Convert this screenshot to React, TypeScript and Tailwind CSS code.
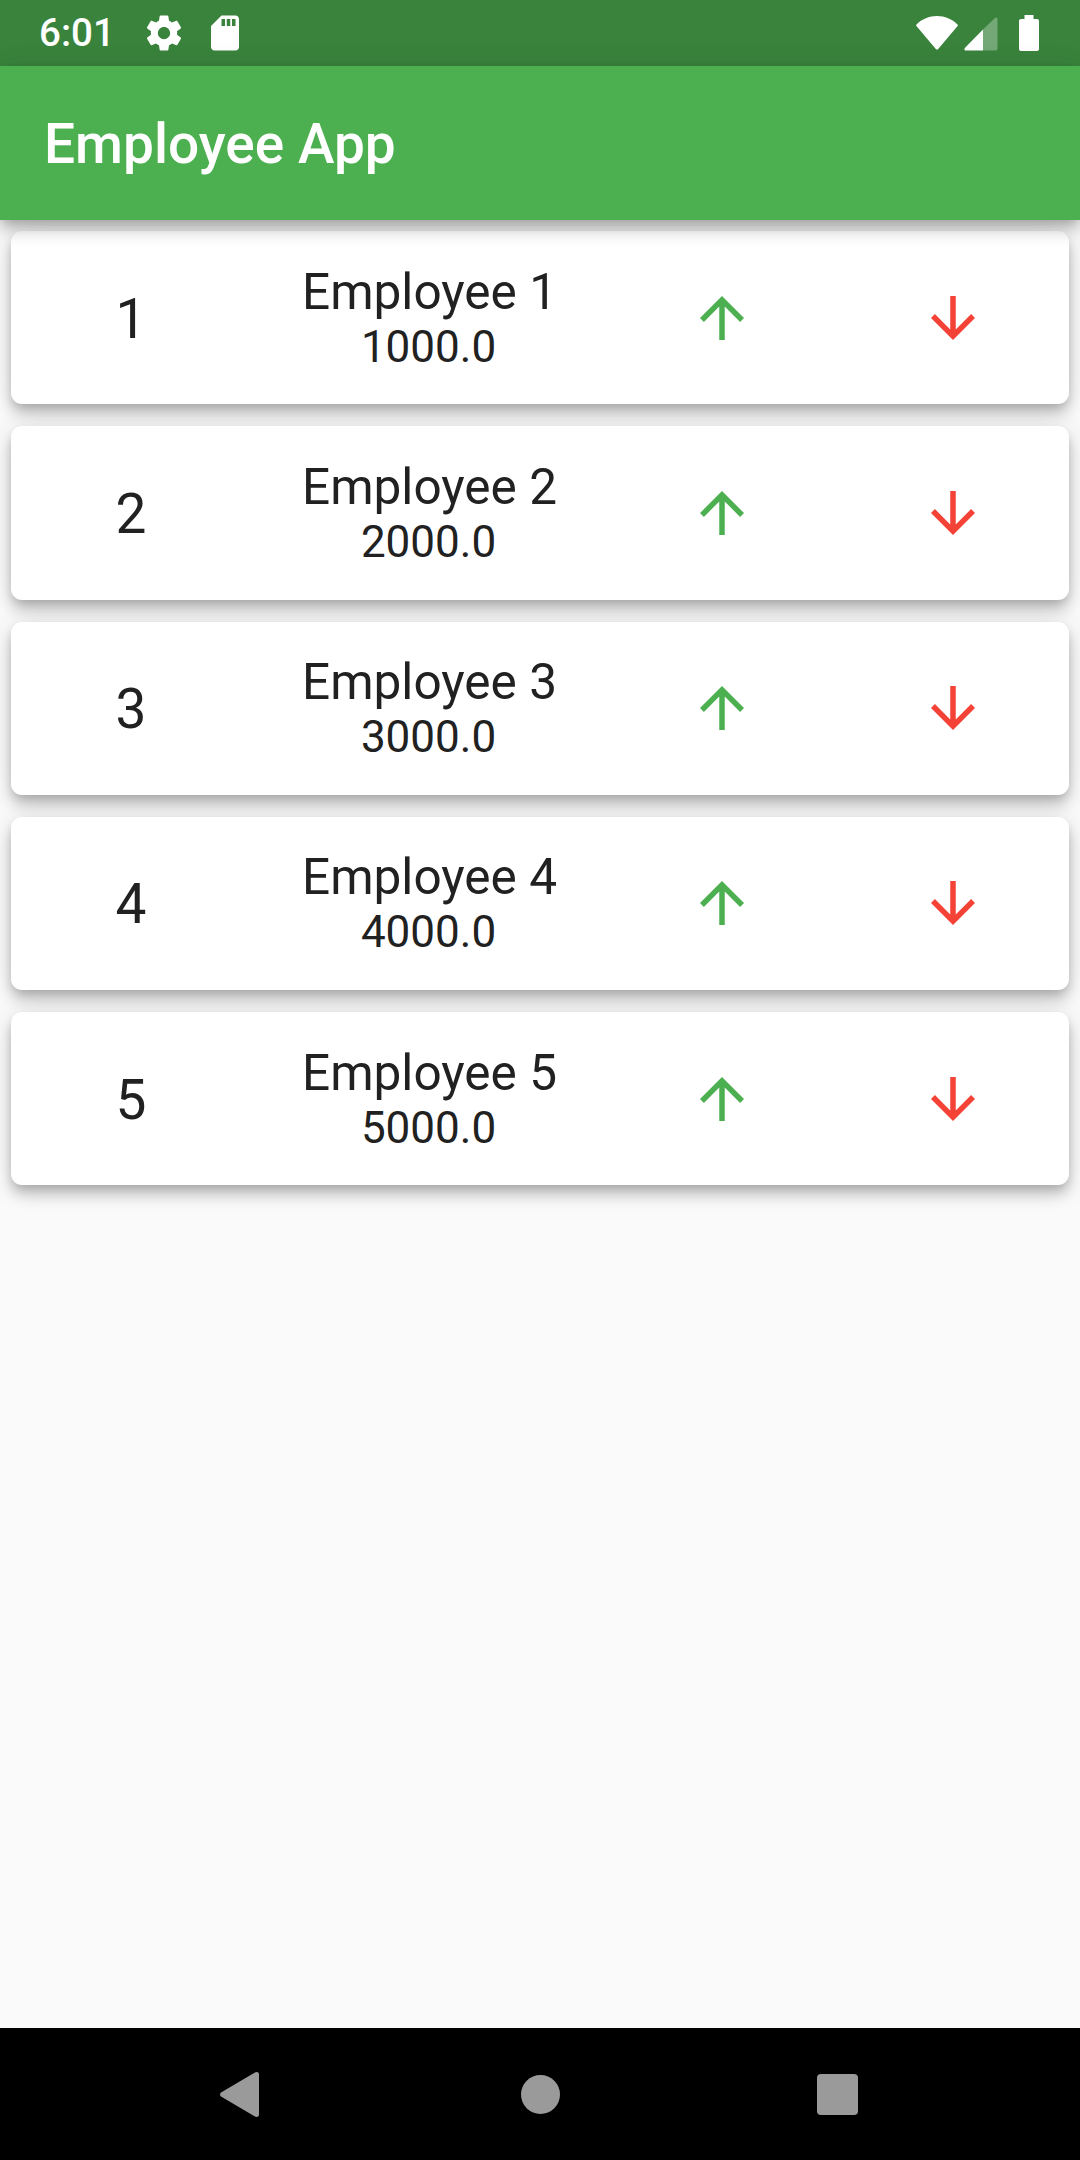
const font = 'font-["Roboto",sans-serif]'

const employees = [
  { id: 1, name: 'Employee 1', salary: '1000.0' },
  { id: 2, name: 'Employee 2', salary: '2000.0' },
  { id: 3, name: 'Employee 3', salary: '3000.0' },
  { id: 4, name: 'Employee 4', salary: '4000.0' },
  { id: 5, name: 'Employee 5', salary: '5000.0' },
]

function StatusBar() {
  return (
    <div className="h-[66px] shrink-0 bg-[#39833c] flex items-center pl-[39px] pr-[41px] text-white">
      <span className="text-[38.5px] font-medium leading-[66px] w-[105px]">6:01</span>
      {/* settings */}
      <svg className="w-[42px] h-[42px] -mt-[1px] -ml-[1px]" viewBox="0 0 24 24" fill="currentColor">
        <path d="M19.43 12.98c.04-.32.07-.64.07-.98s-.03-.66-.07-.98l2.11-1.65c.19-.15.24-.42.12-.64l-2-3.46c-.12-.22-.39-.3-.61-.22l-2.49 1c-.52-.4-1.08-.73-1.69-.98l-.38-2.65C14.46 2.18 14.25 2 14 2h-4c-.25 0-.46.18-.49.42l-.38 2.65c-.61.25-1.17.59-1.69.98l-2.49-1c-.23-.09-.49 0-.61.22l-2 3.46c-.13.22-.07.49.12.64l2.11 1.65c-.04.32-.07.65-.07.98s.03.66.07.98l-2.11 1.65c-.19.15-.24.42-.12.64l2 3.46c.12.22.39.3.61.22l2.49-1c.52.4 1.08.73 1.69.98l.38 2.65c.03.24.24.42.49.42h4c.25 0 .46-.18.49-.42l.38-2.65c.61-.25 1.17-.59 1.69-.98l2.49 1c.23.09.49 0 .61-.22l2-3.46c.12-.22.07-.49-.12-.64l-2.11-1.65zM12 15.5c-1.93 0-3.5-1.57-3.5-3.5s1.57-3.5 3.5-3.5 3.5 1.57 3.5 3.5-1.57 3.5-3.5 3.5z" />
      </svg>
      {/* sd card */}
      <svg className="w-[42px] h-[42px] ml-[19px] -mt-[1px]" viewBox="0 0 24 24" fill="currentColor">
        <path d="M18 2h-8L4.02 8 4 20c0 1.1.9 2 2 2h12c1.1 0 2-.9 2-2V4c0-1.1-.9-2-2-2zm-6 6h-2V4h2v4zm3 0h-2V4h2v4zm3 0h-2V4h2v4z" />
      </svg>

      <div className="ml-auto flex items-center">
        {/* wifi */}
        <svg className="w-[42px] h-[34px] -mt-[1px]" viewBox="0 0 42 34" fill="currentColor">
          <path d="M0.5 8.5 C6 3 13 0 21 0 C29 0 36 3 41.5 8.5 C42 9 42 9.6 41.6 10 L22.2 33 C21.5 33.8 20.5 33.8 19.8 33 L0.4 10 C0 9.6 0 9 0.5 8.5 Z" />
        </svg>
        {/* signal */}
        <svg className="w-[34px] h-[34px] ml-[6px] mt-[1px]" viewBox="0 0 34 34" fill="currentColor">
          <path d="M19 12.5 L31 1 C32 0 33.5 0.5 33.5 2 V31.5 C33.5 32.8 32.8 33.5 31.5 33.5 H19 Z" opacity="0.3" />
          <path d="M19 12.5 V33.5 H2 C0.4 33.5 -0.2 32 1 30.8 Z" />
        </svg>
        {/* battery */}
        <svg className="w-[20px] h-[36px] ml-[21px]" viewBox="0 0 20 36" fill="currentColor">
          <path d="M5.5 0 H14.5 V4 H18 C19.2 4 20 4.8 20 6 V34 C20 35.2 19.2 36 18 36 H2 C0.8 36 0 35.2 0 34 V6 C0 4.8 0.8 4 2 4 H5.5 Z" />
        </svg>
      </div>
    </div>
  )
}

function EmployeeCard({ id, name, salary }: { id: number; name: string; salary: string }) {
  return (
    <div className="h-[173.25px] rounded-[11px] bg-white shadow-[0_5px_11px_-3px_rgba(0,0,0,0.2),0_11px_14px_0_rgba(0,0,0,0.14),0_3px_27px_0_rgba(0,0,0,0.12)] grid grid-cols-[240px_355px_231px_232px] items-center text-[#212121]">
      <div className="text-center text-[55px] leading-[64px] pt-[2px]">{id}</div>
      <div className="text-center pl-[2px]">
        <div className="text-[49.5px] leading-[58px]">{name}</div>
        <div className="text-[44px] leading-[52px] pr-[2px]">{salary}</div>
      </div>
      <div className="flex justify-center">
        <svg className="w-[66px] h-[66px] text-[#4caf50]" viewBox="0 0 24 24" fill="currentColor">
          <path d="M4 12l1.41 1.41L11 7.83V20h2V7.83l5.58 5.59L20 12l-8-8-8 8z" />
        </svg>
      </div>
      <div className="flex justify-center">
        <svg className="w-[66px] h-[66px] text-[#f44336]" viewBox="0 0 24 24" fill="currentColor">
          <path d="M20 12l-1.41-1.41L13 16.17V4h-2v12.17l-5.58-5.59L4 12l8 8 8-8z" />
        </svg>
      </div>
    </div>
  )
}

export default function App() {
  return (
    <div className={`h-[2160px] w-[1080px] flex flex-col bg-[#fafafa] overflow-hidden ${font}`}>
      <StatusBar />

      {/* App bar */}
      <header className="relative z-10 h-[154px] shrink-0 bg-[#4caf50] flex items-center pl-[44px] pt-[2px] shadow-[0_5px_11px_-3px_rgba(0,0,0,0.2),0_11px_14px_0_rgba(0,0,0,0.14),0_3px_27px_0_rgba(0,0,0,0.12)]">
        <h1 className="text-[55px] font-medium leading-[64px] text-white">Employee App</h1>
      </header>

      {/* List */}
      <main className="flex-1 flex flex-col gap-[22px] p-[11px]">
        {employees.map(e => (
          <EmployeeCard key={e.id} {...e} />
        ))}
      </main>

      {/* Nav bar */}
      <nav className="h-[132px] shrink-0 bg-black flex items-center pl-[220px]">
        <svg className="w-[39px] h-[45px]" viewBox="0 0 39 45" fill="#9a9a9a">
          <path d="M1 20.5 L34.5 0.8 C36.5 -0.5 39 0 39 2.5 V42.5 C39 45 36.5 45.5 34.5 44.2 L1 24.5 C-0.3 23.5 -0.3 21.5 1 20.5 Z" />
        </svg>
        <div className="ml-[262px] w-[39px] h-[39px] rounded-full bg-[#9a9a9a]" />
        <div className="ml-[257px] w-[41px] h-[41px] rounded-[4px] bg-[#9a9a9a]" />
      </nav>
    </div>
  )
}
